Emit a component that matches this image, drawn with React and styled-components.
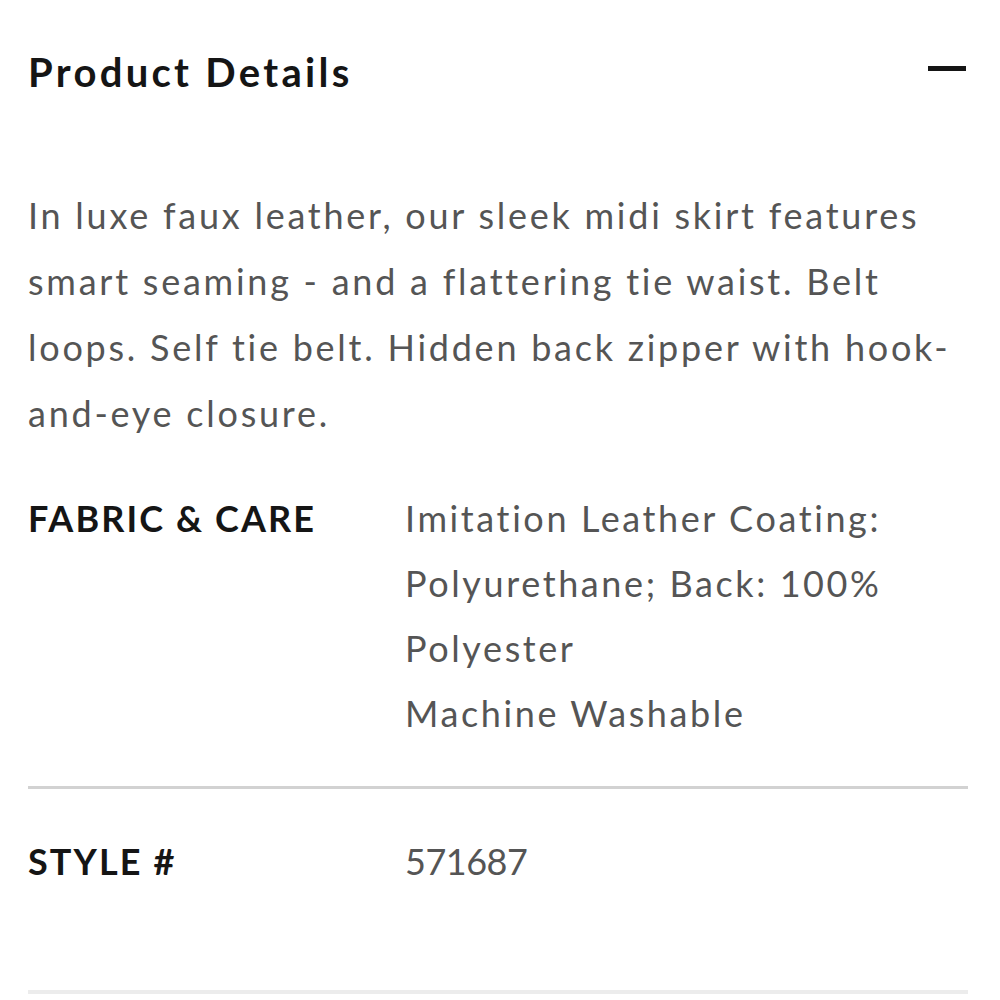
import React from "react";
import styled, { createGlobalStyle } from "styled-components";

const Global = createGlobalStyle`
  html, body { margin: 0; padding: 0; background: #fff; }
  body { font-family: Lato, "Noto Sans", sans-serif; }
`;

const Page = styled.div`
  width: 1000px;
  height: 1000px;
  box-sizing: border-box;
  padding: 0 32px 0 28px;
  overflow: hidden;
`;

const Header = styled.div`
  display: flex;
  align-items: center;
  justify-content: space-between;
  height: 146px;
  padding-bottom: 2px;
  box-sizing: border-box;
`;

const Title = styled.h2`
  margin: 0;
  font-size: 40px;
  font-weight: 700;
  color: #151515;
  letter-spacing: 3.3px;
`;

const Minus = styled.span`
  display: block;
  width: 38px;
  height: 5px;
  background: #151515;
  margin-bottom: 8px;
  margin-right: 2px;
`;

const Description = styled.p`
  margin: 0;
  padding-top: 36px;
  font-size: 36px;
  line-height: 66px;
  color: #555;
  letter-spacing: 2.75px;
`;

const InfoRow = styled.div`
  display: grid;
  grid-template-columns: 377px 1fr;
  padding: ${(p) => p.$pad};
  border-bottom: ${(p) => p.$border};
`;

const Label = styled.div`
  font-size: 36px;
  line-height: 65px;
  font-weight: 700;
  color: #151515;
  letter-spacing: 2.1px;
`;

const Value = styled.div`
  font-size: 36px;
  line-height: 65px;
  color: #555;
  letter-spacing: ${(p) => (p.$numeric ? "-0.5px" : "2.6px")};
`;

export default function App() {
  return (
    <Page>
      <Global />
      <Header>
        <Title>Product Details</Title>
        <Minus />
      </Header>
      <Description>
        In luxe faux leather, our sleek midi skirt features smart seaming - and a flattering tie waist. Belt loops. Self tie belt. Hidden back zipper with hook-and-eye closure.
      </Description>
      <InfoRow $pad="40px 0 40px" $border="3px solid #d2d2d2">
        <Label>FABRIC &amp; CARE</Label>
        <Value>
          Imitation Leather Coating: Polyurethane; Back: 100% Polyester
          <br />
          Machine Washable
        </Value>
      </InfoRow>
      <InfoRow $pad="40px 0 96px" $border="4px solid #ececec">
        <Label>STYLE #</Label>
        <Value $numeric>571687</Value>
      </InfoRow>
    </Page>
  );
}
